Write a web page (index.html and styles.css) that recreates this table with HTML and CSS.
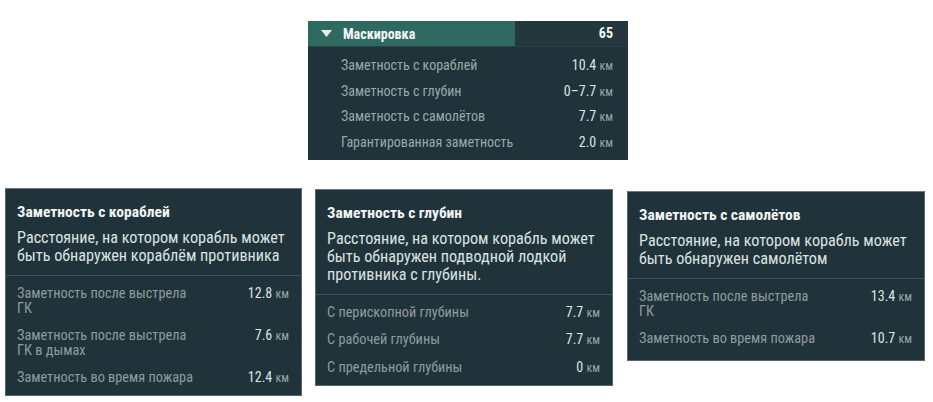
FILE: index.html
```html
<!DOCTYPE html>
<html lang="ru">
<head>
<meta charset="utf-8">
<title>Маскировка</title>
<link rel="stylesheet" href="styles.css">
</head>
<body>
<div class="page">
  <section class="summary">
    <div class="summary-head">
      <div class="head-label">
        <svg class="caret" width="11" height="7" viewBox="0 0 11 7"><polygon points="0,0 11,0 5.5,7" fill="#e8eeee"/></svg>
        <span>Маскировка</span>
      </div>
      <div class="head-value">65</div>
    </div>
    <ul class="summary-rows">
      <li><span>Заметность с кораблей</span><span class="val">10.4 <small>км</small></span></li>
      <li><span>Заметность с глубин</span><span class="val">0–7.7 <small>км</small></span></li>
      <li><span>Заметность с самолётов</span><span class="val">7.7 <small>км</small></span></li>
      <li><span>Гарантированная заметность</span><span class="val">2.0 <small>км</small></span></li>
    </ul>
  </section>

  <div class="tips">
    <section class="tip tip-ships">
      <div class="tip-top">
        <h3>Заметность с кораблей</h3>
        <p>Расстояние, на котором корабль может быть обнаружен кораблём противника</p>
      </div>
      <ul class="tip-rows">
        <li><span class="lbl">Заметность после выстрела ГК</span><span class="val">12.8 <small>км</small></span></li>
        <li><span class="lbl">Заметность после выстрела ГК в дымах</span><span class="val">7.6 <small>км</small></span></li>
        <li><span class="lbl">Заметность во время пожара</span><span class="val">12.4 <small>км</small></span></li>
      </ul>
    </section>
    <section class="tip tip-depth">
      <div class="tip-top">
        <h3>Заметность с глубин</h3>
        <p>Расстояние, на котором корабль может быть обнаружен подводной лодкой противника с глубины.</p>
      </div>
      <ul class="tip-rows">
        <li><span class="lbl">С перископной глубины</span><span class="val">7.7 <small>км</small></span></li>
        <li><span class="lbl">С рабочей глубины</span><span class="val">7.7 <small>км</small></span></li>
        <li><span class="lbl">С предельной глубины</span><span class="val">0 <small>км</small></span></li>
      </ul>
    </section>
    <section class="tip tip-air">
      <div class="tip-top">
        <h3>Заметность с самолётов</h3>
        <p>Расстояние, на котором корабль может быть обнаружен самолётом</p>
      </div>
      <ul class="tip-rows">
        <li><span class="lbl">Заметность после выстрела ГК</span><span class="val">13.4 <small>км</small></span></li>
        <li><span class="lbl">Заметность во время пожара</span><span class="val">10.7 <small>км</small></span></li>
      </ul>
    </section>
  </div>
</div>
</body>
</html>
```

FILE: styles.css
```css
* { box-sizing: border-box; }
html, body { margin: 0; padding: 0; background: #ffffff; }
body {
  font-family: Roboto, "Liberation Sans", sans-serif;
  font-stretch: 75%;
  color: #d6dede;
}
ul { list-style: none; margin: 0; padding: 0; }
h3, p { margin: 0; }

.page { padding-top: 21px; }

.summary {
  margin-left: 308px;
  width: 320px;
  background: #21333a;
}
.summary-head {
  display: flex;
  height: 26px;
  border-bottom: 1px solid #2c4147;
}
.head-label {
  width: 207px;
  background: #2e6a5f;
  display: flex;
  align-items: center;
  padding-left: 13px;
  gap: 11px;
  font-weight: bold;
  font-size: 14px;
  color: #f4f7f7;
}
.head-label .caret { flex: none; }
.head-value {
  flex: 1;
  background: #24373d;
  text-align: right;
  padding-right: 15px;
  font-weight: bold;
  font-size: 14px;
  line-height: 25px;
  color: #f4f7f7;
}
.summary-rows { padding: 5px 15px 5px 33px; }
.summary-rows li {
  display: flex;
  justify-content: space-between;
  height: 25.7px;
  align-items: center;
  font-size: 14px;
  color: #9aa8aa;
}
.val { color: #dde4e4; font-size: 14px; white-space: nowrap; }
.val small { font-size: 12px; color: #98a6a8; }

.tips {
  display: flex;
  align-items: flex-start;
  margin-top: 28px;
  padding-left: 5px;
}
.tip {
  flex: none;
  background: #21333a;
  border: 1px solid #56666a;
  border-top-color: #6b797c;
}
.tip-ships { width: 297px; }
.tip-depth { width: 298px; margin-left: 13px; margin-top: 1px; }
.tip-air { width: 298px; margin-left: 14px; margin-top: 3px; }

.tip-top {
  padding: 15px 11px 10px 11px;
  border-bottom: 1px solid #3f5358;
}
.tip-top h3 {
  font-size: 15.5px;
  line-height: 17px;
  color: #f2f5f5;
  font-weight: bold;
  margin-bottom: 8px;
}
.tip-top p {
  font-size: 16.2px;
  line-height: 18px;
  color: #dbe2e2;
}
.tip-rows { padding: 10px 12px 9px 11px; display: flex; flex-direction: column; gap: 11px; }
.tip-air .tip-rows { padding-bottom: 13px; }
.tip-rows li {
  display: flex;
  justify-content: space-between;
  align-items: flex-start;
  font-size: 14.3px;
  line-height: 15.5px;
}
.tip-rows .lbl { color: #8e9c9f; max-width: 176px; }
.tip-rows .val { font-size: 14px; }
```
